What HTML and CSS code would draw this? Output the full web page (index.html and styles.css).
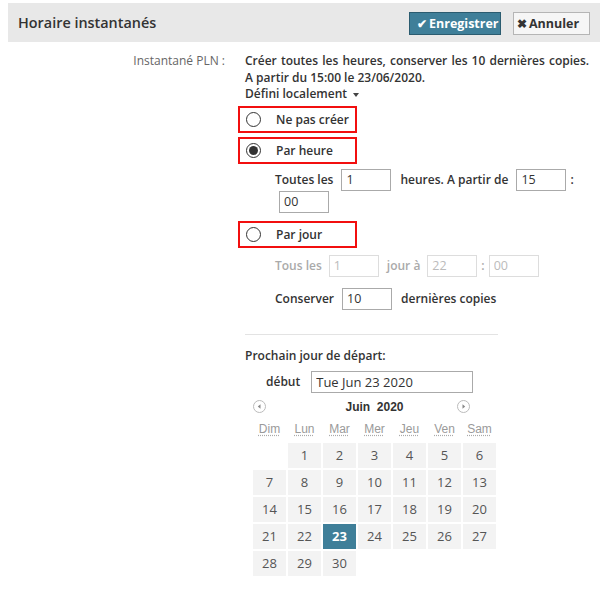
FILE: index.html
```html
<!DOCTYPE html>
<html lang="fr">
<head>
<meta charset="utf-8">
<title>Horaire instantanés</title>
<link rel="stylesheet" href="styles.css">
</head>
<body>
<div class="page">
  <div class="header">
    <h1 class="title">Horaire instantanés</h1>
    <div class="actions">
      <button class="btn btn-primary"><span class="ico">✔</span>Enregistrer</button>
      <button class="btn btn-default"><span class="ico">✖</span>Annuler</button>
    </div>
  </div>

  <div class="form-row">
    <div class="label">Instantané PLN :</div>
    <div class="content">
      <div class="summary">
        <div class="wide">Créer toutes les heures, conserver les 10 dernières copies.</div>
        <div>A partir du 15:00 le 23/06/2020.</div>
        <div>Défini localement <span class="caret"></span></div>
      </div>

      <div class="radio-box first"><span class="radio"></span><span>Ne pas créer</span></div>
      <div class="radio-box"><span class="radio checked"></span><span>Par heure</span></div>

      <div class="field-row hours">
        <span>Toutes les</span>
        <input class="inp" type="text" value="1">
        <span class="after">heures. A partir de</span>
        <input class="inp" type="text" value="15">
        <span class="colon">:</span>
      </div>
      <div class="field-row wrap">
        <input class="inp" type="text" value="00">
      </div>

      <div class="radio-box jour"><span class="radio"></span><span>Par jour</span></div>

      <div class="field-row disabled">
        <span>Tous les</span>
        <input class="inp" type="text" value="1" disabled>
        <span class="after">jour à</span>
        <input class="inp" type="text" value="22" disabled>
        <span class="colon">:</span>
        <input class="inp" type="text" value="00" disabled>
      </div>

      <div class="field-row keep">
        <span>Conserver</span>
        <input class="inp" type="text" value="10">
        <span class="after">dernières copies</span>
      </div>

      <div class="sep"></div>

      <div class="next-title">Prochain jour de départ:</div>
      <div class="start-row">
        <span>début</span>
        <input class="inp date" type="text" value="Tue Jun 23 2020">
      </div>

      <div class="calendar">
        <div class="cal-head">
          <span class="nav"><svg width="13" height="13" viewBox="0 0 13 13"><circle cx="6.5" cy="6.5" r="6" fill="#fff" stroke="#bbb"/><path d="M7.5 4.3 L4.8 6.5 L7.5 8.7 Z" fill="#888"/></svg></span>
          <span class="month">Juin&nbsp; 2020</span>
          <span class="nav next"><svg width="13" height="13" viewBox="0 0 13 13"><circle cx="6.5" cy="6.5" r="6" fill="#fff" stroke="#bbb"/><path d="M5.5 4.3 L8.2 6.5 L5.5 8.7 Z" fill="#888"/></svg></span>
        </div>
        <div class="cal-grid">
          <abbr class="dn" title="Dimanche">Dim</abbr>
          <abbr class="dn" title="Lundi">Lun</abbr>
          <abbr class="dn" title="Mardi">Mar</abbr>
          <abbr class="dn" title="Mercredi">Mer</abbr>
          <abbr class="dn" title="Jeudi">Jeu</abbr>
          <abbr class="dn" title="Vendredi">Ven</abbr>
          <abbr class="dn" title="Samedi">Sam</abbr>

          <span class="empty"></span>
          <span class="d">1</span><span class="d">2</span><span class="d">3</span><span class="d">4</span><span class="d">5</span><span class="d">6</span>
          <span class="d">7</span><span class="d">8</span><span class="d">9</span><span class="d">10</span><span class="d">11</span><span class="d">12</span><span class="d">13</span>
          <span class="d">14</span><span class="d">15</span><span class="d">16</span><span class="d">17</span><span class="d">18</span><span class="d">19</span><span class="d">20</span>
          <span class="d">21</span><span class="d">22</span><span class="d sel">23</span><span class="d">24</span><span class="d">25</span><span class="d">26</span><span class="d">27</span>
          <span class="d">28</span><span class="d">29</span><span class="d">30</span>
        </div>
      </div>
    </div>
  </div>
</div>
</body>
</html>
```

FILE: styles.css
```css
* { box-sizing: border-box; }

html, body {
  margin: 0;
  padding: 0;
  background: #fff;
}

body {
  font-family: "Open Sans", "DejaVu Sans", sans-serif;
  font-size: 12px;
  color: #333;
}

.page {
  padding: 3px 8px 0 8px;
}

.header {
  display: flex;
  align-items: center;
  justify-content: space-between;
  height: 39px;
  background: #e8e8e8;
  padding: 0 10px 0 10px;
}

.title {
  margin: 0;
  font-size: 14.4px;
  font-weight: 600;
  color: #333;
}

.actions {
  display: flex;
  gap: 12px;
  padding-top: 1px;
}

.btn {
  font-family: "Open Sans", sans-serif;
  font-size: 12.5px;
  font-weight: 700;
  height: 23px;
  padding: 0 6px;
  display: flex;
  align-items: center;
  border: 1px solid #aaa;
  border-radius: 0;
  cursor: pointer;
}

.btn .ico {
  font-size: 12px;
  margin-right: 2px;
}

.btn-primary {
  width: 92px;
  background: #3f7f99;
  border-color: #2b5c70;
  color: #fff;
  padding-left: 7px;
}

.btn-default {
  width: 77px;
  background: #f6f6f6;
  border-color: #b5b5b5;
  color: #333;
  padding-left: 3px;
}

.form-row {
  display: flex;
  margin-top: 11px;
}

.label {
  width: 217px;
  text-align: right;
  color: #666;
  line-height: 16.5px;
  flex: none;
}

.content {
  margin-left: 20px;
  flex: 1;
}

.summary {
  font-weight: 600;
  line-height: 16.5px;
}

.summary .wide { word-spacing: 1px; }

.caret {
  display: inline-block;
  width: 0;
  height: 0;
  border-left: 3.5px solid transparent;
  border-right: 3.5px solid transparent;
  border-top: 4px solid #444;
  vertical-align: middle;
  margin-left: 3px;
}

.radio-box {
  display: flex;
  align-items: center;
  width: 119px;
  height: 27px;
  margin-left: -7px;
  margin-top: 4px;
  border: 2px solid #f20f0f;
  padding-left: 6px;
  font-weight: 600;
  font-size: 12px;
}

.radio-box.first { margin-top: 3px; }
.radio-box.jour { margin-top: 8px; }

.radio {
  width: 15px;
  height: 15px;
  border: 1px solid #333;
  border-radius: 50%;
  margin-right: 15px;
  display: flex;
  align-items: center;
  justify-content: center;
  background: #fff;
}

.radio.checked::after {
  content: "";
  width: 9px;
  height: 9px;
  border-radius: 50%;
  background: #333;
}

.field-row {
  display: flex;
  align-items: center;
  height: 22px;
  padding-left: 30px;
  font-weight: 600;
  gap: 8px;
}

.field-row.hours { margin-top: 5px; }

.field-row .after { margin-left: 1px; }
.field-row .colon { margin-left: -4px; }

.field-row.wrap { padding-left: 34px; }

.field-row.disabled {
  margin-top: 7px;
  color: #aaa;
  gap: 7px;
}

.field-row.disabled .colon { margin-left: -3px; margin-right: -3px; }

.field-row.keep { margin-top: 11px; }

.inp {
  width: 50px;
  height: 22px;
  border: 1px solid #aaa;
  padding: 0 4px;
  font-family: "Open Sans", sans-serif;
  font-size: 12.5px;
  color: #333;
  background: #fff;
  outline: none;
}

.inp:disabled {
  border-color: #ddd;
  color: #bbb;
  background: #fff;
}

.sep {
  width: 253px;
  height: 1px;
  background: #e3e3e3;
  margin-top: 24px;
}

.next-title {
  font-weight: 600;
  line-height: 17px;
  margin-top: 12px;
}

.start-row {
  display: flex;
  align-items: center;
  margin-top: 7px;
  padding-left: 21px;
  font-weight: 600;
  gap: 11px;
}

.inp.date {
  width: 162px;
  font-size: 13px;
}

.calendar {
  margin-left: 8px;
  width: 243px;
}

.cal-head {
  display: flex;
  align-items: center;
  height: 20px;
  margin-top: 4px;
  position: relative;
}

.nav {
  display: flex;
  width: 13px;
  height: 13px;
}

.nav.next { margin-left: auto; margin-right: 26px; }

.month {
  position: absolute;
  left: 0;
  right: 0;
  text-align: center;
  font-family: "Liberation Sans", Arial, sans-serif;
  font-weight: 700;
  font-size: 12px;
  color: #333;
  pointer-events: none;
}

.cal-grid {
  display: grid;
  grid-template-columns: repeat(7, 33px);
  grid-template-rows: 22px;
  grid-auto-rows: 25px;
  gap: 2px;
  margin-top: 2px;
}

.dn {
  font-family: "Liberation Sans", Arial, sans-serif;
  font-size: 12px;
  color: #9a9a9a;
  text-align: center;
  text-decoration: underline dotted #aaa;
  text-underline-offset: 2px;
  line-height: 20px;
  height: 22px;
}

.d {
  background: #f3f3f3;
  color: #555;
  font-size: 13px;
  display: flex;
  align-items: center;
  justify-content: center;
}

.d.sel {
  background: #3f7f99;
  color: #fff;
  font-weight: 700;
}
```
